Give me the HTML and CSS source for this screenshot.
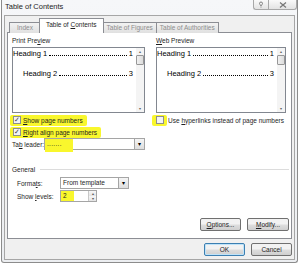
FILE: index.html
```
<html>
<head>
    <link rel="stylesheet" href="styles.css">
</head>
<body>
    <div class="window">
        <div class="titlebar">
            <span class="title">Table of Contents</span>
            <div class="caption_btns">
                <div class="cap help">
                    <svg width="6" height="7" viewBox="0 0 6 7"><path d="M1.5 2.5a1.5 1.5 0 1 1 3 0c0 1-1 1.2-1 2h-1c0-.8-1-1-1-2z" fill="none" stroke="#666" stroke-width=".8"/><path d="M2.5 6h1" stroke="#666" stroke-width=".8"/></svg>
                </div>
                <div class="cap close">
                    <svg width="8" height="6" viewBox="0 0 8 6"><path d="M1 .5l6 5M7 .5l-6 5" stroke="#777" stroke-width="1.2"/></svg>
                </div>
            </div>
        </div>
        <div class="client">
            <div class="tabs">
                <div class="tab">Index</div>
                <div class="tab active">Table of <u>C</u>ontents</div>
                <div class="tab">Table of Figures</div>
                <div class="tab">Table of Authorities</div>
            </div>
            <div class="panel">
                <div class="columns">
                    <div class="col left_col">
                        <div class="label">Print Pre<u>v</u>iew</div>
                        <div class="preview">
                            <div class="preview_text">
                                <div class="toc_line"><span>Heading 1</span><span class="dots"></span><span>1</span></div>
                                <div class="toc_line level2"><span>Heading 2</span><span class="dots"></span><span>3</span></div>
                            </div>
                            <div class="scrollbar">
                                <div class="arrow">&#9652;</div>
                                <div class="thumb"></div>
                                <div class="track"></div>
                                <div class="arrow">&#9662;</div>
                            </div>
                        </div>
                        <div class="check_row"><span class="hl"><span class="box">&#10003;</span><span><u>S</u>how page numbers</span></span></div>
                        <div class="check_row"><span class="hl"><span class="box">&#10003;</span><span><u>R</u>ight align page numbers</span></span></div>
                        <div class="field_row">
                            <span class="field_label">Ta<u>b</u> leader:</span>
                            <div class="select leader_select">
                                <span class="select_val hl_val">.......</span>
                                <span class="drop">&#9662;</span>
                            </div>
                        </div>
                    </div>
                    <div class="col right_col">
                        <div class="label"><u>W</u>eb Preview</div>
                        <div class="preview">
                            <div class="preview_text">
                                <div class="toc_line"><span>Heading 1</span><span class="dots"></span><span>1</span></div>
                                <div class="toc_line level2"><span>Heading 2</span><span class="dots"></span><span>3</span></div>
                            </div>
                            <div class="scrollbar">
                                <div class="arrow">&#9652;</div>
                                <div class="thumb"></div>
                                <div class="track"></div>
                                <div class="arrow">&#9662;</div>
                            </div>
                        </div>
                        <div class="check_row"><span class="hl hl_box"><span class="box"></span></span><span>Use <u>h</u>yperlinks instead of page numbers</span></div>
                    </div>
                </div>
                <div class="general">
                    <span>General</span>
                    <div class="rule"></div>
                </div>
                <div class="gen_row">
                    <span class="gen_label">Forma<u>t</u>s:</span>
                    <div class="select formats_select">
                        <span class="select_val">From template</span>
                        <span class="drop">&#9662;</span>
                    </div>
                </div>
                <div class="gen_row">
                    <span class="gen_label">Show <u>l</u>evels:</span>
                    <div class="spinner">
                        <span class="spin_val">2</span>
                        <div class="spin_btns"><span>&#9652;</span><span>&#9662;</span></div>
                    </div>
                </div>
                <div class="panel_btns">
                    <button class="btn"><u>O</u>ptions...</button>
                    <button class="btn"><u>M</u>odify...</button>
                </div>
            </div>
            <div class="dialog_btns">
                <button class="btn default">OK</button>
                <button class="btn">Cancel</button>
            </div>
        </div>
    </div>
</body>
</html>
```
FILE: styles.css
```
body {
    margin: 0;
    background-color: #ffffff;
    font-family: "Liberation Sans", Arial, sans-serif;
    font-size: 6.5px;
    color: #1e1e1e;
    white-space: nowrap;
}

.window {
    margin-left: 1px;
    width: 295px;
    height: 262px;
    border: 1px solid #8c8c8c;
    border-top: none;
    border-radius: 0 0 3px 3px;
    background: linear-gradient(#f6f7f9, #eceef1);
    display: flex;
    flex-direction: column;
}

.titlebar {
    height: 15px;
    display: flex;
    justify-content: space-between;
    align-items: flex-start;
}

.title {
    font-size: 7.5px;
    margin: 2px 0 0 3px;
    line-height: 10px;
}

.caption_btns {
    display: flex;
}

.cap {
    height: 9px;
    border: 1px solid #a8a8a8;
    border-top: none;
    background: linear-gradient(#fafafa, #e3e3e3);
    display: flex;
    align-items: center;
    justify-content: center;
}

.help {
    width: 14px;
    border-radius: 0 0 0 3px;
    border-right: none;
}

.close {
    width: 27px;
    border-radius: 0 0 3px 0;
}

.client {
    flex: 1;
    margin: 0 2px 2px 2px;
    border: 1px solid #a6a6a6;
    background-color: #f0f0f0;
    padding: 3px 2px 0 2px;
}

.tabs {
    display: flex;
    align-items: flex-end;
    height: 14px;
    margin-left: 2px;
    position: relative;
    z-index: 1;
}

.tab {
    height: 10px;
    line-height: 10px;
    padding: 0 3px;
    border: 1px solid #8c8e94;
    border-bottom: none;
    margin-right: -1px;
    background: linear-gradient(#f2f2f2, #e0e0e0);
    color: #8d8d8d;
}

.tab:first-child {
    padding: 0 7px;
}

.tab.active {
    height: 14px;
    line-height: 12px;
    padding: 0 6px;
    margin: 0 -1px;
    background: #ffffff;
    color: #1e1e1e;
    position: relative;
    z-index: 2;
}

.panel {
    height: 202px;
    border: 1px solid #8c8e94;
    background-color: #ffffff;
    margin-top: -1px;
    padding: 3px 2px 0 4px;
    display: flex;
    flex-direction: column;
}

.columns {
    display: flex;
    gap: 11px;
}

.left_col {
    width: 133px;
}

.right_col {
    width: 130px;
}

.label {
    height: 11px;
    line-height: 10px;
}

.preview {
    height: 64px;
    border: 1px solid #828790;
    display: flex;
}

.preview_text {
    flex: 1;
    min-width: 0;
    padding: 0 3px 0 0;
    font-size: 7.5px;
    color: #000000;
}

.toc_line {
    display: flex;
    align-items: flex-end;
    height: 11px;
    line-height: 11px;
}

.toc_line.level2 {
    padding-left: 10px;
    margin-top: 9px;
}

.toc_line span {
    flex-shrink: 0;
}

.toc_line .dots {
    flex: 1 1 0;
    height: 0;
    border-bottom: 1px dotted #000000;
    margin: 0 2px 3px 2px;
}

.scrollbar {
    width: 8px;
    flex-shrink: 0;
    background-color: #f4f4f4;
    display: flex;
    flex-direction: column;
}

.arrow {
    height: 7px;
    line-height: 7px;
    font-size: 4px;
    text-align: center;
    color: #606060;
}

.thumb {
    height: 8px;
    border: 1px solid #979797;
    border-radius: 1px;
    background: linear-gradient(90deg, #f0f0f0, #dcdcdc);
}

.track {
    flex: 1;
}

.check_row {
    height: 12px;
    display: flex;
    align-items: center;
    margin-top: 1px;
}

.check_row + .check_row {
    margin-top: 0;
}

.hl {
    background-color: #f9f72d;
    display: flex;
    align-items: center;
    height: 11px;
    margin-left: -2px;
    padding: 0 4px 0 2px;
    border-radius: 2px;
}

.hl_box {
    margin-left: -4px;
    padding: 0 1px 0 3px;
    margin-right: 1px;
}

.box {
    width: 6px;
    height: 6px;
    border: 1px solid #8e8f8f;
    background-color: #f4f4f4;
    font-size: 7px;
    line-height: 6px;
    text-align: center;
    color: #3a3a3a;
    margin: 0 2px 0 1px;
    overflow: hidden;
}

.field_row {
    height: 12px;
    display: flex;
    align-items: center;
}

.field_label {
    width: 32px;
    flex-shrink: 0;
}

.select {
    height: 10px;
    border: 1px solid #a5a5a5;
    background-color: #ffffff;
    display: flex;
    align-items: flex-start;
}

.leader_select {
    flex: 1;
}

.select_val {
    flex: 1;
    line-height: 10px;
    padding-left: 2px;
}

.hl_val {
    flex: 0 0 26px;
    background-color: #f9f72d;
    height: 13px;
    letter-spacing: 0.3px;
}

.drop {
    width: 9px;
    height: 10px;
    margin-left: auto;
    border-left: 1px solid #a5a5a5;
    background: linear-gradient(#f5f5f5, #dedede);
    font-size: 6px;
    line-height: 10px;
    text-align: center;
    color: #000000;
}

.general {
    display: flex;
    align-items: center;
    height: 10px;
    margin-top: 14px;
}

.rule {
    flex: 1;
    height: 1px;
    background-color: #dcdcdc;
    margin-left: 5px;
}

.gen_row {
    display: flex;
    align-items: center;
    height: 12px;
    padding-left: 5px;
    margin-top: 1px;
}

.general + .gen_row {
    margin-top: 3px;
}

.gen_label {
    width: 43px;
}

.formats_select {
    width: 67px;
}

.spinner {
    width: 35px;
    height: 10px;
    border: 1px solid #a5a5a5;
    display: flex;
}

.spin_val {
    width: 11px;
    line-height: 10px;
    padding-left: 2px;
    background-color: #f9f72d;
}

.spin_btns {
    margin-left: auto;
    width: 7px;
    display: flex;
    flex-direction: column;
    border-left: 1px solid #c8c8c8;
}

.spin_btns span {
    height: 5px;
    line-height: 5px;
    font-size: 4px;
    text-align: center;
    color: #555555;
    background: linear-gradient(#f7f7f7, #e4e4e4);
}

.panel_btns {
    display: flex;
    justify-content: flex-end;
    gap: 6px;
    margin-top: 16px;
}

.btn {
    width: 41px;
    height: 13px;
    padding: 0;
    border: 1px solid #707070;
    border-radius: 2px;
    background: linear-gradient(#f2f2f2 45%, #dddddd 55%, #cfcfcf);
    font-family: "Liberation Sans", Arial, sans-serif;
    font-size: 6.5px;
    color: #1e1e1e;
}

.panel_btns .btn + .btn {
    width: 42px;
}

.dialog_btns {
    display: flex;
    justify-content: flex-end;
    gap: 6px;
    margin-top: 4px;
}

.btn.default {
    border-color: #3c7fb1;
    box-shadow: inset 0 0 0 1px #bfe3f9;
}
```
